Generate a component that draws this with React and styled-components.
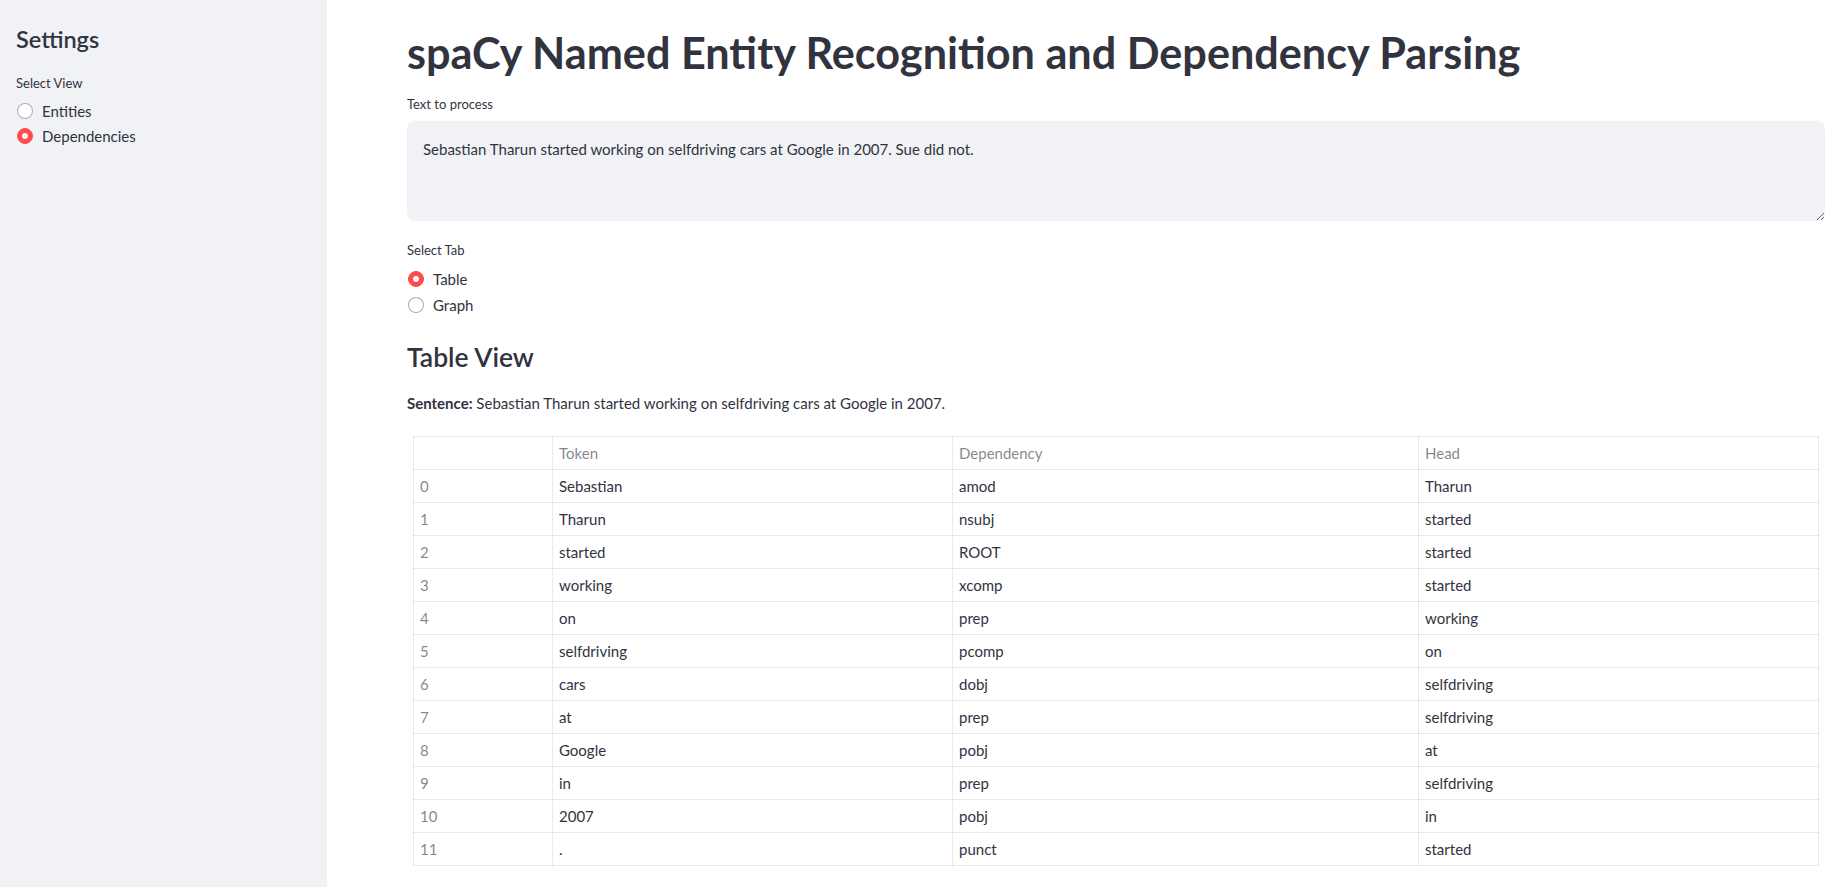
import React from "react";
import styled, { createGlobalStyle } from "styled-components";

const GlobalStyle = createGlobalStyle`
  html, body { margin: 0; padding: 0; background: #ffffff; }
  body {
    font-family: "Lato", "Noto Sans", sans-serif;
    color: #31333f;
    -webkit-font-smoothing: antialiased;
  }
  * { box-sizing: border-box; }
`;

const Page = styled.div`
  display: flex;
  min-height: 887px;
  width: 1838px;
`;

const Sidebar = styled.aside`
  width: 327px;
  flex: 0 0 327px;
  background: #f0f2f6;
  padding: 25px 16px 16px 16px;
  display: flex;
  flex-direction: column;
`;

const SidebarTitle = styled.h2`
  margin: 0 0 20px 0;
  font-size: 23.5px;
  font-weight: 600;
  line-height: 28px;
  color: #31333f;
`;

const Main = styled.main`
  flex: 1;
  padding: 26px 13px 20px 80px;
  display: flex;
  flex-direction: column;
  min-width: 0;
`;

const Title = styled.h1`
  margin: 0 0 16px 0;
  font-size: 43.2px;
  font-weight: 700;
  line-height: 52px;
  color: #31333f;
  white-space: nowrap;
`;

const FieldLabel = styled.div`
  font-size: 13px;
  line-height: 20px;
  color: #31333f;
  margin-bottom: ${(p) => p.$gap || 5}px;
`;

const TextArea = styled.textarea`
  display: block;
  width: 100%;
  height: 100px;
  margin: 0 0 19px 0;
  padding: 16px 16px;
  border: none;
  border-radius: 8px;
  background: #f0f2f6;
  color: #31333f;
  font-family: "Lato", "Noto Sans", sans-serif;
  font-size: 15px;
  line-height: 24px;
  outline: none;
  resize: vertical;
`;

const RadioGroup = styled.div`
  display: flex;
  flex-direction: column;
  margin-bottom: ${(p) => p.$mb || 0}px;
`;

const RadioRow = styled.label`
  display: flex;
  align-items: center;
  gap: 9px;
  height: ${(p) => p.$h || 25}px;
  font-size: 15px;
  color: #31333f;
  padding-left: 1px;
`;

const RadioDot = styled.span`
  width: 16px;
  height: 16px;
  border-radius: 50%;
  flex: 0 0 16px;
  display: flex;
  align-items: center;
  justify-content: center;
  background: ${(p) => (p.$checked ? "#ff4b4b" : "#ffffff")};
  border: 1px solid ${(p) => (p.$checked ? "#ff4b4b" : "rgba(49, 51, 63, 0.4)")};

  &::after {
    content: "";
    display: ${(p) => (p.$checked ? "block" : "none")};
    width: 6px;
    height: 6px;
    border-radius: 50%;
    background: #f8f8fa;
  }
`;

const SectionTitle = styled.h3`
  margin: 0 0 18px 0;
  font-size: 26.5px;
  font-weight: 600;
  line-height: 32px;
  color: #31333f;
`;

const Paragraph = styled.p`
  margin: 0 0 21px 0;
  font-size: 15px;
  line-height: 24px;
  color: #31333f;
`;

const Table = styled.table`
  margin: 0 6px;
  width: calc(100% - 12px);
  border-collapse: collapse;
  table-layout: fixed;
  font-size: 15px;
  line-height: 24px;
  color: #31333f;
  border: 1px solid rgba(49, 51, 63, 0.1);
`;

const Cell = styled.td`
  padding: 4px 6px;
  border: 1px solid rgba(49, 51, 63, 0.1);
  text-align: left;
  font-weight: 400;
  vertical-align: middle;
  white-space: nowrap;
  color: ${(p) => (p.$muted ? "rgba(49, 51, 63, 0.6)" : "#31333f")};
`;

function Radio({ label, checked, h }) {
  return (
    <RadioRow $h={h}>
      <RadioDot $checked={checked} />
      {label}
    </RadioRow>
  );
}

const rows = [
  ["Sebastian", "amod", "Tharun"],
  ["Tharun", "nsubj", "started"],
  ["started", "ROOT", "started"],
  ["working", "xcomp", "started"],
  ["on", "prep", "working"],
  ["selfdriving", "pcomp", "on"],
  ["cars", "dobj", "selfdriving"],
  ["at", "prep", "selfdriving"],
  ["Google", "pobj", "at"],
  ["in", "prep", "selfdriving"],
  ["2007", "pobj", "in"],
  [".", "punct", "started"],
];

export default function App() {
  return (
    <>
      <GlobalStyle />
      <Page>
        <Sidebar>
          <SidebarTitle>Settings</SidebarTitle>
          <FieldLabel $gap={5}>Select View</FieldLabel>
          <RadioGroup>
            <Radio label="Entities" />
            <Radio label="Dependencies" checked />
          </RadioGroup>
        </Sidebar>
        <Main>
          <Title>spaCy Named Entity Recognition and Dependency Parsing</Title>
          <FieldLabel $gap={7}>Text to process</FieldLabel>
          <TextArea
            readOnly
            defaultValue="Sebastian Tharun started working on selfdriving cars at Google in 2007. Sue did not."
          />
          <FieldLabel $gap={6}>Select Tab</FieldLabel>
          <RadioGroup $mb={23}>
            <Radio label="Table" checked h={26} />
            <Radio label="Graph" h={26} />
          </RadioGroup>
          <SectionTitle>Table View</SectionTitle>
          <Paragraph>
            <strong>Sentence:</strong> Sebastian Tharun started working on selfdriving cars at Google in 2007.
          </Paragraph>
          <Table>
            <colgroup>
              <col style={{ width: 139 }} />
              <col style={{ width: 400 }} />
              <col style={{ width: 466 }} />
              <col />
            </colgroup>
            <thead>
              <tr>
                <Cell as="th" $muted></Cell>
                <Cell as="th" $muted>Token</Cell>
                <Cell as="th" $muted>Dependency</Cell>
                <Cell as="th" $muted>Head</Cell>
              </tr>
            </thead>
            <tbody>
              {rows.map((r, i) => (
                <tr key={i}>
                  <Cell as="th" $muted>{i}</Cell>
                  <Cell>{r[0]}</Cell>
                  <Cell>{r[1]}</Cell>
                  <Cell>{r[2]}</Cell>
                </tr>
              ))}
            </tbody>
          </Table>
        </Main>
      </Page>
    </>
  );
}
